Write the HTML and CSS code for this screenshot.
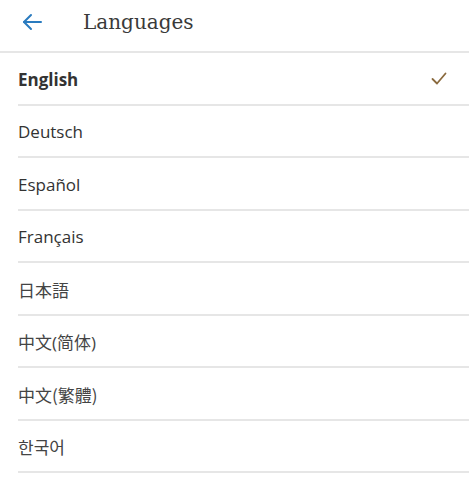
FILE: index.html
```html
<!DOCTYPE html>
<html lang="en">
<head>
    <meta charset="UTF-8">
    <meta name="viewport" content="width=device-width, initial-scale=1.0">
    <title>Languages</title>
    <link rel="stylesheet" href="styles.css">
</head>
<body>
    <header class="topbar">
        <a class="back" href="#" aria-label="Back">
            <svg width="20" height="18" viewBox="0 0 20 18" fill="none" stroke="#2a7bbf" stroke-width="2" stroke-linecap="round" stroke-linejoin="round">
                <path d="M19 9H2"/>
                <path d="M9 2L2 9l7 7"/>
            </svg>
        </a>
        <h1>Languages</h1>
    </header>

    <ul class="lang-list">
        <li class="selected">
            <span>English</span>
            <svg class="check" width="16" height="13" viewBox="0 0 16 13" fill="none" stroke="#8a6a3e" stroke-width="1.8" stroke-linecap="round" stroke-linejoin="round">
                <path d="M1.5 7l4.5 4.5L14.5 1.5"/>
            </svg>
        </li>
        <li><span>Deutsch</span></li>
        <li><span>Español</span></li>
        <li><span>Français</span></li>
        <li><span lang="ja">日本語</span></li>
        <li><span lang="zh-CN">中文(简体)</span></li>
        <li><span lang="zh-TW">中文(繁體)</span></li>
        <li><span lang="ko">한국어</span></li>
    </ul>
</body>
</html>
```

FILE: styles.css
```css
* {
    margin: 0;
    padding: 0;
    box-sizing: border-box;
}

body {
    background: #fff;
    color: #333;
    font-family: 'Open Sans', 'Noto Sans CJK SC', sans-serif;
}

.topbar {
    display: flex;
    align-items: center;
    height: 53px;
    padding: 0 0 8px 22px;
    border-bottom: 2px solid #e6e6e6;
}

.back {
    display: flex;
    width: 20px;
    height: 18px;
}

.topbar h1 {
    margin-left: 41px;
    font-family: 'DejaVu Serif', 'Liberation Serif', serif;
    font-weight: normal;
    font-size: 20px;
    color: #3a3a3a;
}

.lang-list {
    list-style: none;
    padding-left: 18px;
}

.lang-list li {
    display: flex;
    align-items: center;
    justify-content: space-between;
    height: 52.5px;
    padding-right: 22px;
    border-bottom: 2px solid #e6e6e6;
    font-size: 17px;
}

.lang-list li span {
    margin-top: 2px;
}

.lang-list span:lang(ja) {
    font-family: 'Noto Sans CJK JP', sans-serif;
    color: #444;
}

.lang-list span:lang(zh-CN) {
    color: #444;
}

.lang-list span:lang(zh-TW) {
    font-family: 'Noto Sans CJK TC', sans-serif;
    color: #444;
}

.lang-list span:lang(ko) {
    font-family: 'Noto Sans CJK KR', sans-serif;
    color: #444;
}

.lang-list .selected {
    font-weight: 700;
}
```
